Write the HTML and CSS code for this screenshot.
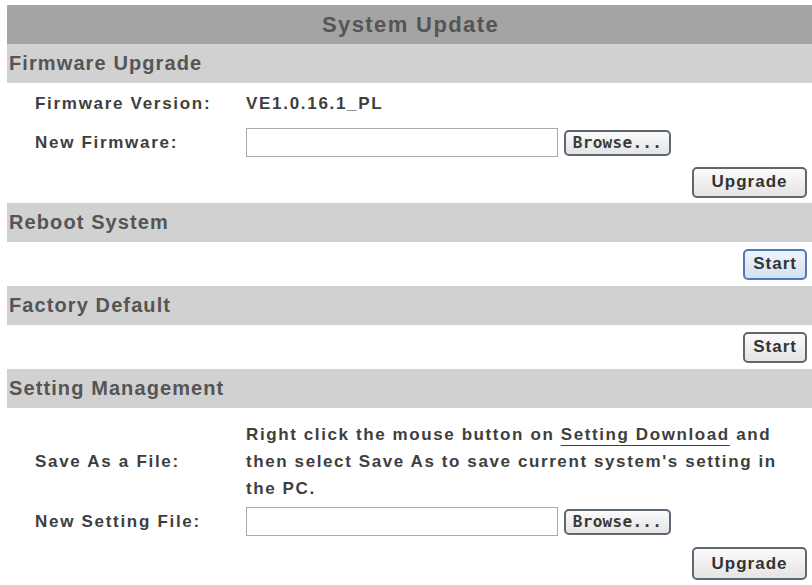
FILE: index.html
```html
<!DOCTYPE html>
<html>

<head>
  <title>System Update</title>

  <link rel="stylesheet" href="styles.css">
</head>

<body>
  <div class="page">
    <div class="title">System Update</div>

    <div class="section">Firmware Upgrade</div>
    <div class="row row-ver">
      <span class="label">Firmware Version:</span>
      <span class="value">VE1.0.16.1_PL</span>
    </div>
    <div class="row row-file">
      <label class="label">New Firmware:</label>
      <div class="file">
        <span class="file-box"></span>
        <button class="btn browse">Browse...</button>
      </div>
    </div>
    <div class="actions act-upgrade">
      <button class="btn wide">Upgrade</button>
    </div>

    <div class="section">Reboot System</div>
    <div class="actions act-start">
      <button class="btn focused">Start</button>
    </div>

    <div class="section">Factory Default</div>
    <div class="actions act-start">
      <button class="btn">Start</button>
    </div>

    <div class="section">Setting Management</div>
    <div class="row row-save">
      <span class="label">Save As a File:</span>
      <p class="desc">Right click the mouse button on <a href="#">Setting Download</a> and then select Save As to save current system's setting in the PC.</p>
    </div>
    <div class="row row-file">
      <label class="label">New Setting File:</label>
      <div class="file">
        <span class="file-box"></span>
        <button class="btn browse">Browse...</button>
      </div>
    </div>
    <div class="actions act-last">
      <button class="btn wide">Upgrade</button>
    </div>
  </div>
</body>

</html>
```

FILE: styles.css
```css
body {
  margin: 5px 0 0 7px;
  background: #fff;
  font-family: "Liberation Sans", Arial, sans-serif;
  color: #3e3e3e;
}

.title {
  height: 39px;
  line-height: 39px;
  background-color: #a4a4a4;
  text-align: center;
  font-size: 22px;
  font-weight: bold;
  letter-spacing: 1.4px;
  color: #555;
  padding-left: 2px;
}

.section {
  height: 39px;
  line-height: 39px;
  background-color: #d1d1d1;
  padding-left: 2px;
  font-size: 20px;
  font-weight: bold;
  letter-spacing: 1.1px;
  color: #555;
}

/* label + value rows */
.row {
  display: grid;
  grid-template-columns: 211px 1fr;
  align-items: center;
  padding-left: 28px;
  font-size: 17px;
  font-weight: bold;
  letter-spacing: 1.7px;
}

.row-ver {
  height: 41px;
}

.row-file {
  height: 37px;
}

.row-file + .actions {
  height: 42px;
}

.row-save {
  padding-top: 12px;
  height: 83px;
}

.file {
  display: flex;
  align-items: center;
  gap: 6px;
}

.file-box {
  display: block;
  width: 310px;
  height: 27px;
  border: 1px solid #a3abb3;
  background: #fff;
}

.desc {
  margin: 0;
  line-height: 27px;
  max-width: 540px;
  letter-spacing: 1.6px;
}

.desc a {
  color: #3e3e3e;
  text-decoration: underline;
  text-underline-offset: 5px;
}

.actions {
  display: flex;
  justify-content: flex-end;
  align-items: center;
  padding-right: 5px;
  height: 44px;
}

.act-last {
  align-items: flex-start;
  padding-top: 7px;
  height: auto;
}

.btn {
  height: 31px;
  padding: 0 8px;
  border: 2px solid #5c6975;
  border-radius: 5px;
  background: linear-gradient(#fbfbfb, #e4e4e4);
  font-family: "Liberation Sans", Arial, sans-serif;
  font-size: 17px;
  font-weight: bold;
  letter-spacing: 1px;
  color: #333;
}

.btn.wide {
  width: 115px;
}

.act-last .btn {
  height: 33px;
}

.btn.focused {
  border-color: #4f79b8;
  background: linear-gradient(#eef4fb, #d3e1f2);
}

.btn.browse {
  width: 107px;
  height: 26px;
  padding: 0;
  font-family: "DejaVu Sans Mono", monospace;
  font-size: 16px;
  letter-spacing: 0.3px;
  color: #3a3a3a;
}
```
